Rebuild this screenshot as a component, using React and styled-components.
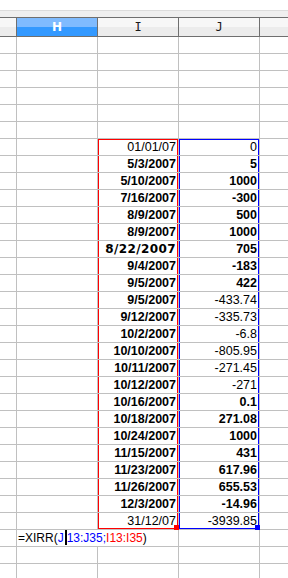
import React from 'react'
import styled, { createGlobalStyle, css } from 'styled-components'

//STYLE
const gridLine = '#c0c0c0'
const headLine = '#6f6f6f'
const colTemplate = '17px 81px 81px 81px 1fr'

const GlobalStyle = createGlobalStyle`
  html, body {
    margin: 0;
    padding: 0;
    background: #ffffff;
    overflow: hidden;
  }
`

const Sheet = styled.div`
  width: 288px;
  height: 578px;
  overflow: hidden;
  background: #ffffff;
  font-family: 'Liberation Sans', Arial, sans-serif;
`

const TopGap = styled.div`
  height: 10px;
  background: #ffffff;
`

const ToolStrip = styled.div`
  height: 6px;
  background: #efefef;
  border-top: 1px solid #dcdcdc;
`

const HeaderRow = styled.div`
  display: grid;
  grid-template-columns: ${colTemplate};
  height: 20px;
  box-sizing: border-box;
  border-top: 1px solid ${headLine};
  border-bottom: 1px solid ${headLine};
`

const HeaderCell = styled.div`
  display: flex;
  align-items: center;
  justify-content: center;
  border-right: 1px solid ${headLine};
  font-family: 'DejaVu Sans Mono', monospace;
  font-size: 12px;
  color: #1a1a1a;
  background: linear-gradient(#f7f7f7 0 50%, #ececec 50% 100%);
  &:last-child { border-right: none; }
  ${p => p.$selected && css`
    background: linear-gradient(#7fbbff 0 50%, #3399ff 50% 100%);
    color: #ffffff;
    font-weight: 700;
    font-family: 'DejaVu Sans', sans-serif;
  `}
`

const Row = styled.div`
  display: grid;
  grid-template-columns: ${colTemplate};
  height: 17px;
`

const Cell = styled.div`
  position: relative;
  box-sizing: border-box;
  height: 17px;
  border-right: 1px solid ${gridLine};
  border-bottom: 1px solid ${gridLine};
  padding: 0 2px 0 1px;
  font-size: 12.5px;
  line-height: 16px;
  color: #000000;
  text-align: right;
  white-space: nowrap;
  font-weight: ${p => (p.$bold ? 700 : 400)};
  &:last-child { border-right: none; }
  ${p => p.$wide && css`
    font-family: 'DejaVu Sans', sans-serif;
    font-size: 12px;
    letter-spacing: 0.4px;
  `}
  ${p => p.$range && css`
    box-shadow:
      inset 1px 0 0 ${p.$range},
      inset -1px 0 0 ${p.$range}
      ${p.$first ? `, inset 0 1px 0 ${p.$range}` : ''}
      ${p.$last ? `, inset 0 -1px 0 ${p.$range}` : ''};
  `}
`

const FormulaCell = styled(Cell)`
  text-align: left;
  font-size: 12px;
  overflow: visible;
  z-index: 1;
  border-right: none;
`

const Handle = styled.span`
  position: absolute;
  right: -1px;
  bottom: -1px;
  width: 5px;
  height: 5px;
  background: ${p => p.$color};
  z-index: 2;
`

const Ref = styled.span`
  color: ${p => p.$color};
`

const Caret = styled.span`
  display: inline-block;
  width: 2px;
  height: 15px;
  margin: 0 0 0 1px;
  vertical-align: -3px;
  background: #000000;
`

//DATA
const rows = [
  ['01/01/07', '0', false, false],
  ['5/3/2007', '5', true, true],
  ['5/10/2007', '1000', true, true],
  ['7/16/2007', '-300', true, true],
  ['8/9/2007', '500', true, true],
  ['8/9/2007', '1000', true, true],
  ['8/22/2007', '705', true, true, true],
  ['9/4/2007', '-183', true, true],
  ['9/5/2007', '422', true, true],
  ['9/5/2007', '-433.74', true, false],
  ['9/12/2007', '-335.73', true, false],
  ['10/2/2007', '-6.8', true, false],
  ['10/10/2007', '-805.95', true, false],
  ['10/11/2007', '-271.45', true, false],
  ['10/12/2007', '-271', true, false],
  ['10/16/2007', '0.1', true, true],
  ['10/18/2007', '271.08', true, true],
  ['10/24/2007', '1000', true, true],
  ['11/15/2007', '431', true, true],
  ['11/23/2007', '617.96', true, true],
  ['11/26/2007', '655.53', true, true],
  ['12/3/2007', '-14.96', true, true],
  ['31/12/07', '-3939.85', false, false],
]

const RED = '#ff0000'
const BLUE = '#0000ff'
const firstData = 6
const totalRows = 32

//MAIN COMPONENT
function App() {
  const body = []
  for (let i = 0; i < totalRows; i++) {
    const d = i - firstData
    if (d >= 0 && d < rows.length) {
      const [date, amount, dateBold, amountBold, wide] = rows[d]
      const first = d === 0
      const last = d === rows.length - 1
      body.push(
        <Row key={i}>
          <Cell />
          <Cell />
          <Cell $bold={dateBold} $wide={wide} $range={RED} $first={first} $last={last}>
            {date}
            {last && <Handle $color={RED} />}
          </Cell>
          <Cell $bold={amountBold} $range={BLUE} $first={first} $last={last}>
            {amount}
            {last && <Handle $color={BLUE} />}
          </Cell>
          <Cell />
        </Row>
      )
    } else if (d === rows.length) {
      body.push(
        <Row key={i}>
          <Cell />
          <FormulaCell>
            =XIRR(<Ref $color={BLUE}>J</Ref><Caret /><Ref $color={BLUE}>13:J35;</Ref>
            <Ref $color={RED}>I13:I35</Ref>)
          </FormulaCell>
          <Cell />
          <Cell />
          <Cell />
        </Row>
      )
    } else {
      body.push(
        <Row key={i}>
          <Cell />
          <Cell />
          <Cell />
          <Cell />
          <Cell />
        </Row>
      )
    }
  }

  return (
    <Sheet>
      <GlobalStyle />
      <TopGap />
      <ToolStrip />
      <HeaderRow>
        <HeaderCell />
        <HeaderCell $selected>H</HeaderCell>
        <HeaderCell>I</HeaderCell>
        <HeaderCell>J</HeaderCell>
        <HeaderCell />
      </HeaderRow>
      {body}
    </Sheet>
  )
}
export default App
